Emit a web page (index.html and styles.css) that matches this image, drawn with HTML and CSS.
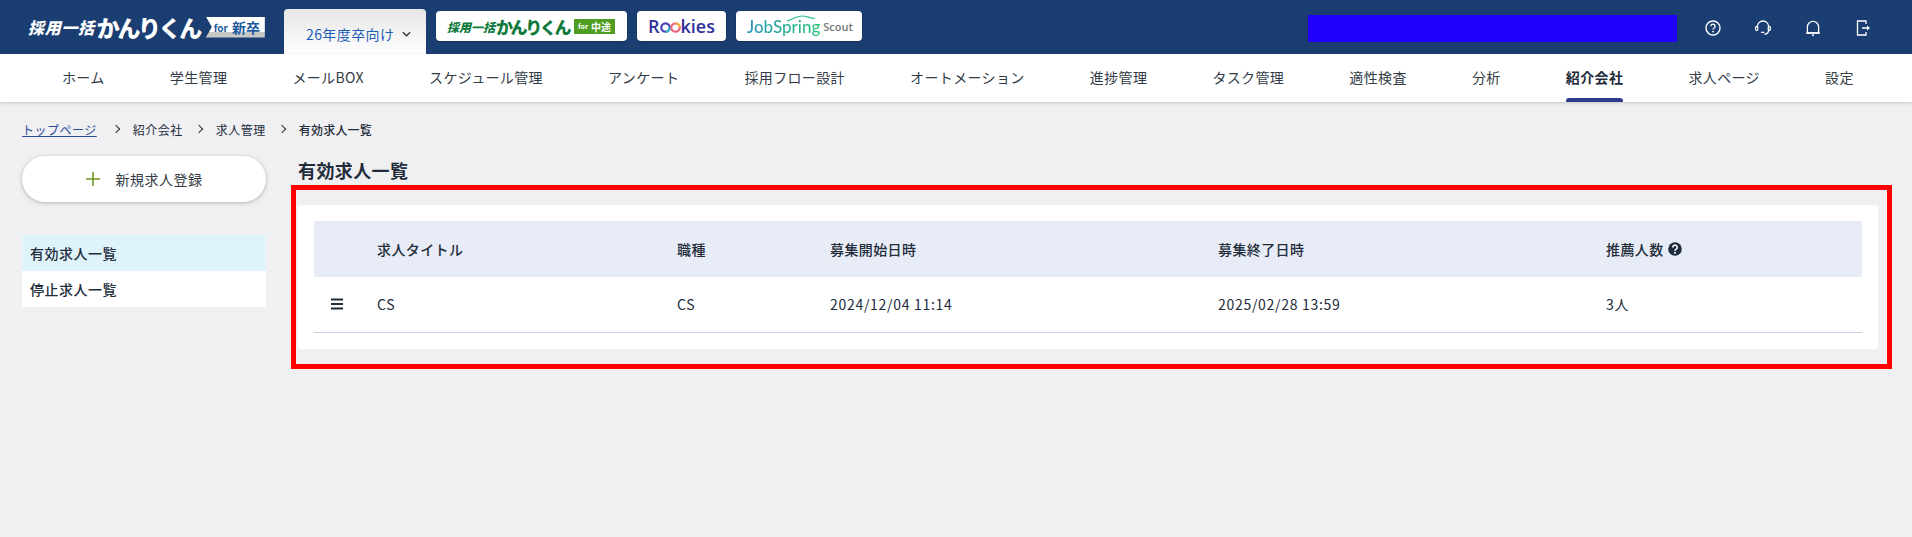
FILE: index.html
```html
<!DOCTYPE html>
<html lang="ja">
<head>
    <meta charset="UTF-8">
    <meta name="viewport" content="width=device-width, initial-scale=1.0">
    <title>有効求人一覧</title>
    <link rel="stylesheet" href="styles.css">
</head>
<body>
    <header class="topbar">
        <div class="logo">
            <span class="logo-small">採用一括</span><span class="logo-big">かんりくん</span>
            <span class="logo-tag"><small>for</small> 新卒</span>
        </div>
        <div class="year-tab">
            <span>26年度卒向け</span>
            <svg class="year-chevron" viewBox="0 0 10 6" width="9" height="6"><path d="M1 1l4 4 4-4" fill="none" stroke="#333" stroke-width="1.4"/></svg>
        </div>
        <a class="service service-chuto">
            <span class="logo-small">採用一括</span><span class="logo-big">かんりくん</span>
            <span class="logo-tag"><small>for</small> 中途</span>
        </a>
        <a class="service service-rookies">
            R<svg class="rings" viewBox="0 0 21 11" width="21" height="11">
                <circle cx="5.5" cy="5.5" r="4.2" fill="none" stroke="#4a3fb8" stroke-width="2.2"/>
                <circle cx="15.5" cy="5.5" r="4.2" fill="none" stroke="#e9657f" stroke-width="2.2"/>
                <path d="M15.5 1.3a4.2 4.2 0 0 1 4.2 4.2" fill="none" stroke="#f2b63c" stroke-width="2.2"/>
                <path d="M5.5 9.7a4.2 4.2 0 0 0 4.2-4.2" fill="none" stroke="#37b7c9" stroke-width="2.2"/>
            </svg>kies
        </a>
        <a class="service service-jobspring">
            <svg class="spring-arc" viewBox="0 0 28 7" width="28" height="7"><path d="M0 6C6 4 10 1 15 1s7 2 13 2.5" fill="none" stroke="#2cc28a" stroke-width="1.2"/></svg>
            <span class="jobspring-name">JobSpring</span>
            <span class="jobspring-scout">Scout</span>
        </a>
        <div class="user-name"></div>
        <div class="top-icons">
            <svg viewBox="0 0 18 18" width="18" height="18"><circle cx="9" cy="9" r="7" fill="none" stroke="#fff" stroke-width="1.4"/><path d="M6.9 7.2a2.1 2.1 0 1 1 3.2 1.8c-.7.4-1.1.8-1.1 1.6" fill="none" stroke="#fff" stroke-width="1.3"/><circle cx="9" cy="12.6" r=".9" fill="#fff"/></svg>
            <svg viewBox="0 0 18 18" width="18" height="18"><path d="M3.4 9V7.6a5.6 5.6 0 0 1 11.2 0V11c0 2.6-1.8 4-4.2 4.4" fill="none" stroke="#fff" stroke-width="1.3"/><rect x="1.6" y="7.4" width="2.2" height="4" rx="1" fill="none" stroke="#fff" stroke-width="1.1"/><rect x="14.2" y="7.4" width="2.2" height="4" rx="1" fill="none" stroke="#fff" stroke-width="1.1"/><path d="M7 13.4h3.4" stroke="#fff" stroke-width="1.3"/></svg>
            <svg viewBox="0 0 18 18" width="18" height="18"><path d="M3.4 14V8a5.6 5.6 0 0 1 11.2 0v6z" fill="none" stroke="#fff" stroke-width="1.3"/><path d="M2 14h14" stroke="#fff" stroke-width="1.3"/><circle cx="9" cy="16.2" r="1" fill="#fff"/></svg>
            <svg viewBox="0 0 18 18" width="18" height="18"><path d="M12 5V2H3.5v14H12v-3" fill="none" stroke="#fff" stroke-width="1.3"/><path d="M8 9h6.5" stroke="#fff" stroke-width="1.5"/><path d="M13 6.4L16 9l-3 2.6z" fill="#fff"/></svg>
        </div>
    </header>

    <nav class="mainnav">
        <a>ホーム</a>
        <a>学生管理</a>
        <a>メールBOX</a>
        <a>スケジュール管理</a>
        <a>アンケート</a>
        <a>採用フロー設計</a>
        <a>オートメーション</a>
        <a>進捗管理</a>
        <a>タスク管理</a>
        <a>適性検査</a>
        <a>分析</a>
        <a class="active">紹介会社</a>
        <a>求人ページ</a>
        <a>設定</a>
    </nav>

    <div class="breadcrumb">
        <a class="crumb-link">トップページ</a>
        <i class="crumb-sep"></i>
        <span>紹介会社</span>
        <i class="crumb-sep"></i>
        <span>求人管理</span>
        <i class="crumb-sep"></i>
        <strong>有効求人一覧</strong>
    </div>

    <div class="layout">
        <aside class="sidebar">
            <button class="new-btn" type="button">
                <svg viewBox="0 0 14 14" width="14" height="14"><path d="M7 0v14M0 7h14" stroke="#6d9a1e" stroke-width="1.6"/></svg>
                <span>新規求人登録</span>
            </button>
            <ul class="side-menu">
                <li class="current">有効求人一覧</li>
                <li>停止求人一覧</li>
            </ul>
        </aside>

        <main class="content">
            <h1>有効求人一覧</h1>
            <div class="highlight">
                <section class="card">
                    <table>
                        <thead>
                            <tr>
                                <th class="col-handle"></th>
                                <th class="col-title">求人タイトル</th>
                                <th class="col-job">職種</th>
                                <th class="col-date">募集開始日時</th>
                                <th class="col-date">募集終了日時</th>
                                <th>
                                    <span class="with-help">推薦人数
                                        <svg viewBox="0 0 14 14" width="14" height="14"><circle cx="7" cy="7" r="6.8" fill="#1f2d3d"/><path d="M4.8 5.4a2.2 2.2 0 1 1 3.4 1.8c-.8.5-1.2.8-1.2 1.6" fill="none" stroke="#fff" stroke-width="1.6"/><circle cx="7" cy="10.8" r="1" fill="#fff"/></svg>
                                    </span>
                                </th>
                            </tr>
                        </thead>
                        <tbody>
                            <tr>
                                <td><span class="handle"></span></td>
                                <td>CS</td>
                                <td>CS</td>
                                <td>2024/12/04 11:14</td>
                                <td>2025/02/28 13:59</td>
                                <td>3人</td>
                            </tr>
                        </tbody>
                    </table>
                </section>
            </div>
        </main>
    </div>
</body>
</html>
```

FILE: styles.css
```css
body {
    margin: 0;
    height: 537px;
    overflow: hidden;
    background-color: #f0f0f3;
    color: #222c3a;
    font-family: "Noto Sans CJK JP", "Noto Sans", sans-serif;
    font-size: 14px;
}

/* header */
.topbar {
    display: flex;
    align-items: flex-start;
    height: 54px;
    padding-left: 28px;
    background-color: #1b3e72;
}
.logo {
    display: flex;
    align-items: center;
    width: 256px;
    height: 22px;
    margin-top: 16px;
    color: #fff;
    white-space: nowrap;
}
.logo-small {
    font-size: 16px;
    font-weight: 900;
    font-style: italic;
    letter-spacing: 0.7px;
}
.logo-big {
    font-size: 23px;
    font-weight: 900;
    letter-spacing: -2.4px;
    margin-left: 2px;
}
.logo-tag {
    display: flex;
    align-items: center;
    justify-content: center;
    gap: 4px;
    width: 59px;
    height: 21px;
    margin-left: 6px;
    padding-left: 3px;
    box-sizing: border-box;
    background: linear-gradient(#fff 72%, #c8c8c8 72%);
    color: #1b5a9c;
    font-size: 14px;
    font-weight: 700;
    clip-path: polygon(0 0, 100% 0, 100% 100%, 0 100%, 6px 50%);
}
.logo-tag small {
    font-size: 10px;
}
.year-tab {
    display: flex;
    align-items: center;
    gap: 8px;
    box-sizing: border-box;
    width: 142px;
    height: 45px;
    margin-top: 9px;
    padding: 4px 0 0 22px;
    border-radius: 4px 4px 0 0;
    background: linear-gradient(#e6e6e6, #fff);
    color: #1d5cb4;
    font-size: 14px;
    letter-spacing: 0.4px;
    white-space: nowrap;
}
.service {
    display: flex;
    align-items: center;
    box-sizing: border-box;
    position: relative;
    height: 30px;
    margin-top: 11px;
    border-radius: 4px;
    background-color: #fff;
    box-shadow: 0 1px 2px rgba(0, 0, 0, 0.25);
    white-space: nowrap;
}
.service-chuto {
    width: 191px;
    margin-left: 10px;
    padding-left: 11px;
    color: #0f7a3c;
}
.service-chuto .logo-small {
    font-size: 12px;
    letter-spacing: 0;
}
.service-chuto .logo-big {
    margin-left: 1px;
    font-size: 17px;
    letter-spacing: -2.4px;
}
.service-chuto .logo-tag {
    width: 41px;
    height: 15px;
    margin-left: 5px;
    padding-left: 0;
    gap: 3px;
    background: #4f9e22;
    color: #fff;
    font-size: 10px;
    clip-path: none;
}
.service-chuto .logo-tag small {
    font-size: 7px;
}
.service-rookies {
    padding-left: 11px;
    width: 89px;
    margin-left: 10px;
    color: #30309c;
    font-family: "Open Sans", sans-serif;
    font-size: 18px;
    font-weight: 600;
}
.rings {
    margin: 2px 0 0;
}
.service-jobspring {
    width: 126px;
    margin-left: 10px;
    padding-left: 11px;
}
.spring-arc {
    position: absolute;
    left: 51px;
    top: 4px;
}
.jobspring-name {
    background: linear-gradient(90deg, #2a93b8, #25c476);
    -webkit-background-clip: text;
    background-clip: text;
    color: transparent;
    font-family: "Lato", sans-serif;
    font-size: 17px;
    font-weight: 500;
}
.jobspring-scout {
    margin-left: 3px;
    color: #777;
    font-family: "Open Sans", sans-serif;
    font-size: 11px;
    font-weight: 600;
}
.user-name {
    width: 369px;
    height: 27px;
    margin: 15px 0 0 446px;
    background-color: #2200ff;
}
.top-icons {
    display: flex;
    gap: 32px;
    margin: 19px 0 0 27px;
}

/* nav */
.mainnav {
    position: relative;
    display: flex;
    justify-content: space-between;
    box-sizing: border-box;
    height: 48px;
    padding: 0 58px 0 62px;
    background-color: #fff;
    box-shadow: 0 1px 3px rgba(0, 0, 0, 0.18);
}
.mainnav a {
    position: relative;
    padding-bottom: 1px;
    line-height: 47px;
    color: #333b46;
    letter-spacing: 0.35px;
    white-space: nowrap;
}
.mainnav a.active {
    color: #222c3a;
    font-weight: 700;
}
.mainnav a.active::after {
    content: "";
    position: absolute;
    left: 0;
    right: 0;
    bottom: 0;
    height: 4px;
    border-radius: 3px 3px 0 0;
    background-color: #2e3a8c;
}

/* breadcrumb */
.breadcrumb {
    display: flex;
    align-items: center;
    height: 54px;
    padding-left: 22px;
    font-size: 12px;
    letter-spacing: 0.5px;
}
.breadcrumb strong {
    font-weight: 500;
    letter-spacing: 0.2px;
}
.crumb-link {
    margin-right: 3px;
    color: #2b4a9b;
    text-decoration: underline;
}
.crumb-sep {
    width: 5px;
    height: 5px;
    margin: 0 14px 0 13px;
    border-top: 1.5px solid #333;
    border-right: 1.5px solid #333;
    transform: rotate(45deg);
}

/* page */
.layout {
    display: flex;
    align-items: flex-start;
    gap: 25px;
    padding-left: 22px;
}
.sidebar {
    width: 244px;
    flex-shrink: 0;
}
.new-btn {
    display: flex;
    align-items: center;
    justify-content: center;
    gap: 16px;
    width: 100%;
    height: 46px;
    border: none;
    border-radius: 23px;
    background-color: #fff;
    box-shadow: 0 1px 4px rgba(0, 0, 0, 0.25);
    color: #333b46;
    font-family: inherit;
    font-size: 14px;
    letter-spacing: 0.5px;
}
.side-menu {
    margin: 33px 0 0;
    padding: 0;
    list-style: none;
    background-color: #fff;
}
.side-menu li {
    height: 36px;
    padding-left: 8px;
    line-height: 36px;
    font-weight: 500;
    letter-spacing: 0.5px;
}
.side-menu li.current {
    background-color: #dff3fb;
}
.content {
    flex: 1;
    padding-right: 20px;
}
h1 {
    margin: 0;
    height: 29px;
    padding-left: 7px;
    font-size: 18px;
    font-weight: 700;
    line-height: 29px;
    letter-spacing: 0.4px;
}
.highlight {
    padding: 15px 9px 15px 2px;
    border: 5px solid #ff0000;
}
.card {
    padding: 16px;
    border-radius: 4px;
    background-color: #fff;
}
table {
    width: 100%;
    border-collapse: separate;
    border-spacing: 0;
    table-layout: fixed;
}
th {
    height: 56px;
    padding: 0;
    background-color: #e8ecf6;
    font-weight: 500;
    letter-spacing: 0.4px;
    text-align: left;
}
td {
    height: 53px;
    padding: 0 0 2px;
    border-bottom: 1px solid #c5d2e3;
    letter-spacing: 0.7px;
}
.col-handle {
    width: 63px;
}
.col-title {
    width: 300px;
}
.col-job {
    width: 153px;
}
.col-date {
    width: 388px;
}
.with-help {
    display: inline-flex;
    align-items: center;
    gap: 4px;
}
.handle {
    display: block;
    width: 12px;
    height: 2px;
    margin-left: 17px;
    background-color: #1f2d3d;
    box-shadow: 0 -4.5px 0 #1f2d3d, 0 4.5px 0 #1f2d3d;
}
```
